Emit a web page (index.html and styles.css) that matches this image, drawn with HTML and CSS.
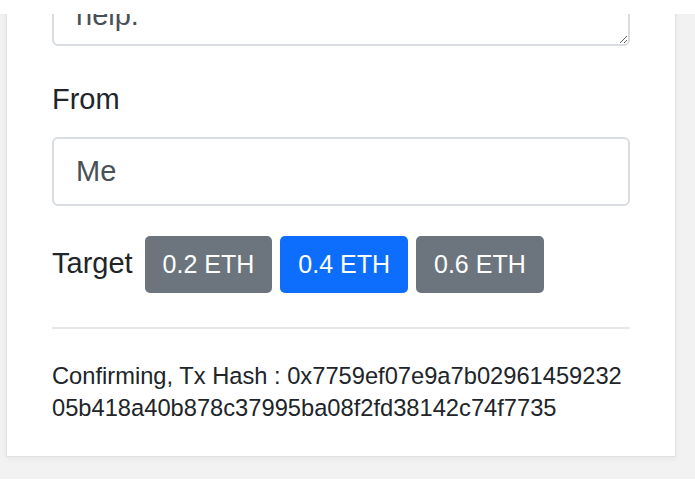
FILE: index.html
```html
<!DOCTYPE html>
<html lang="en">
<head>
<meta charset="utf-8">
<title>Tip</title>
<link rel="stylesheet" href="styles.css">
</head>
<body>
<div class="top-cover"></div>
<main class="page">
  <section class="card">
    <div class="form-group">
      <textarea class="form-control textarea" rows="2">Thanks for all your
help.</textarea>
    </div>
    <div class="form-group">
      <label class="label">From</label>
      <input class="form-control input" type="text" value="Me">
    </div>
    <div class="target-row">
      <span class="target-label">Target</span>
      <button class="btn btn-secondary">0.2 ETH</button>
      <button class="btn btn-primary">0.4 ETH</button>
      <button class="btn btn-secondary">0.6 ETH</button>
    </div>
    <hr class="divider">
    <p class="status">Confirming, Tx Hash : 0x7759ef07e9a7b02961459232<br>05b418a40b878c37995ba08f2fd38142c74f7735</p>
  </section>
</main>
</body>
</html>
```

FILE: styles.css
```css
* { box-sizing: border-box; }

html, body {
  margin: 0;
  padding: 0;
  background: #ffffff;
  font-family: "Liberation Sans", Arial, sans-serif;
  color: #212529;
}

.top-cover {
  position: fixed;
  top: 0;
  left: 0;
  right: 0;
  height: 14px;
  background: #ffffff;
  z-index: 10;
}

.page {
  background: #f2f2f2;
  padding: 0 19px 22px 6px;
}

.card {
  margin-top: -108px;
  background: #ffffff;
  border: 1px solid #e0e0e0;
  box-shadow: 0 2px 6px rgba(0, 0, 0, 0.05);
  padding: 45px 45px 32px;
}

.form-group {
  margin-bottom: 32px;
}

.form-control {
  display: block;
  width: 100%;
  border: 2px solid #d9dde1;
  border-radius: 6px;
  background: #ffffff;
  color: #495057;
  font-family: "Liberation Sans", Arial, sans-serif;
  font-size: 29px;
  padding: 0 22px;
  outline: none;
}

.textarea {
  height: 108px;
  line-height: 43px;
  padding-top: 11px;
  padding-bottom: 11px;
  resize: vertical;
  overflow: hidden;
}

.label {
  display: block;
  font-size: 29px;
  line-height: 43px;
  margin-bottom: 16px;
}

.input {
  height: 69px;
}

.target-row {
  display: flex;
  align-items: baseline;
  gap: 8px;
  margin-top: -2px;
}

.target-label {
  font-size: 29px;
  line-height: 43px;
  margin-right: 4px;
}

.btn {
  height: 57px;
  border: none;
  border-radius: 5px;
  padding: 0 18px;
  font-family: "Liberation Sans", Arial, sans-serif;
  font-size: 25px;
  color: #ffffff;
  line-height: 57px;
}

.btn-secondary { background: #6c757d; }
.btn-primary { background: #0d6efd; }

.divider {
  border: none;
  border-top: 2px solid #e8e8e8;
  margin: 34px 0 31px;
}

.status {
  margin: 0;
  font-size: 23.7px;
  line-height: 32px;
}
```
